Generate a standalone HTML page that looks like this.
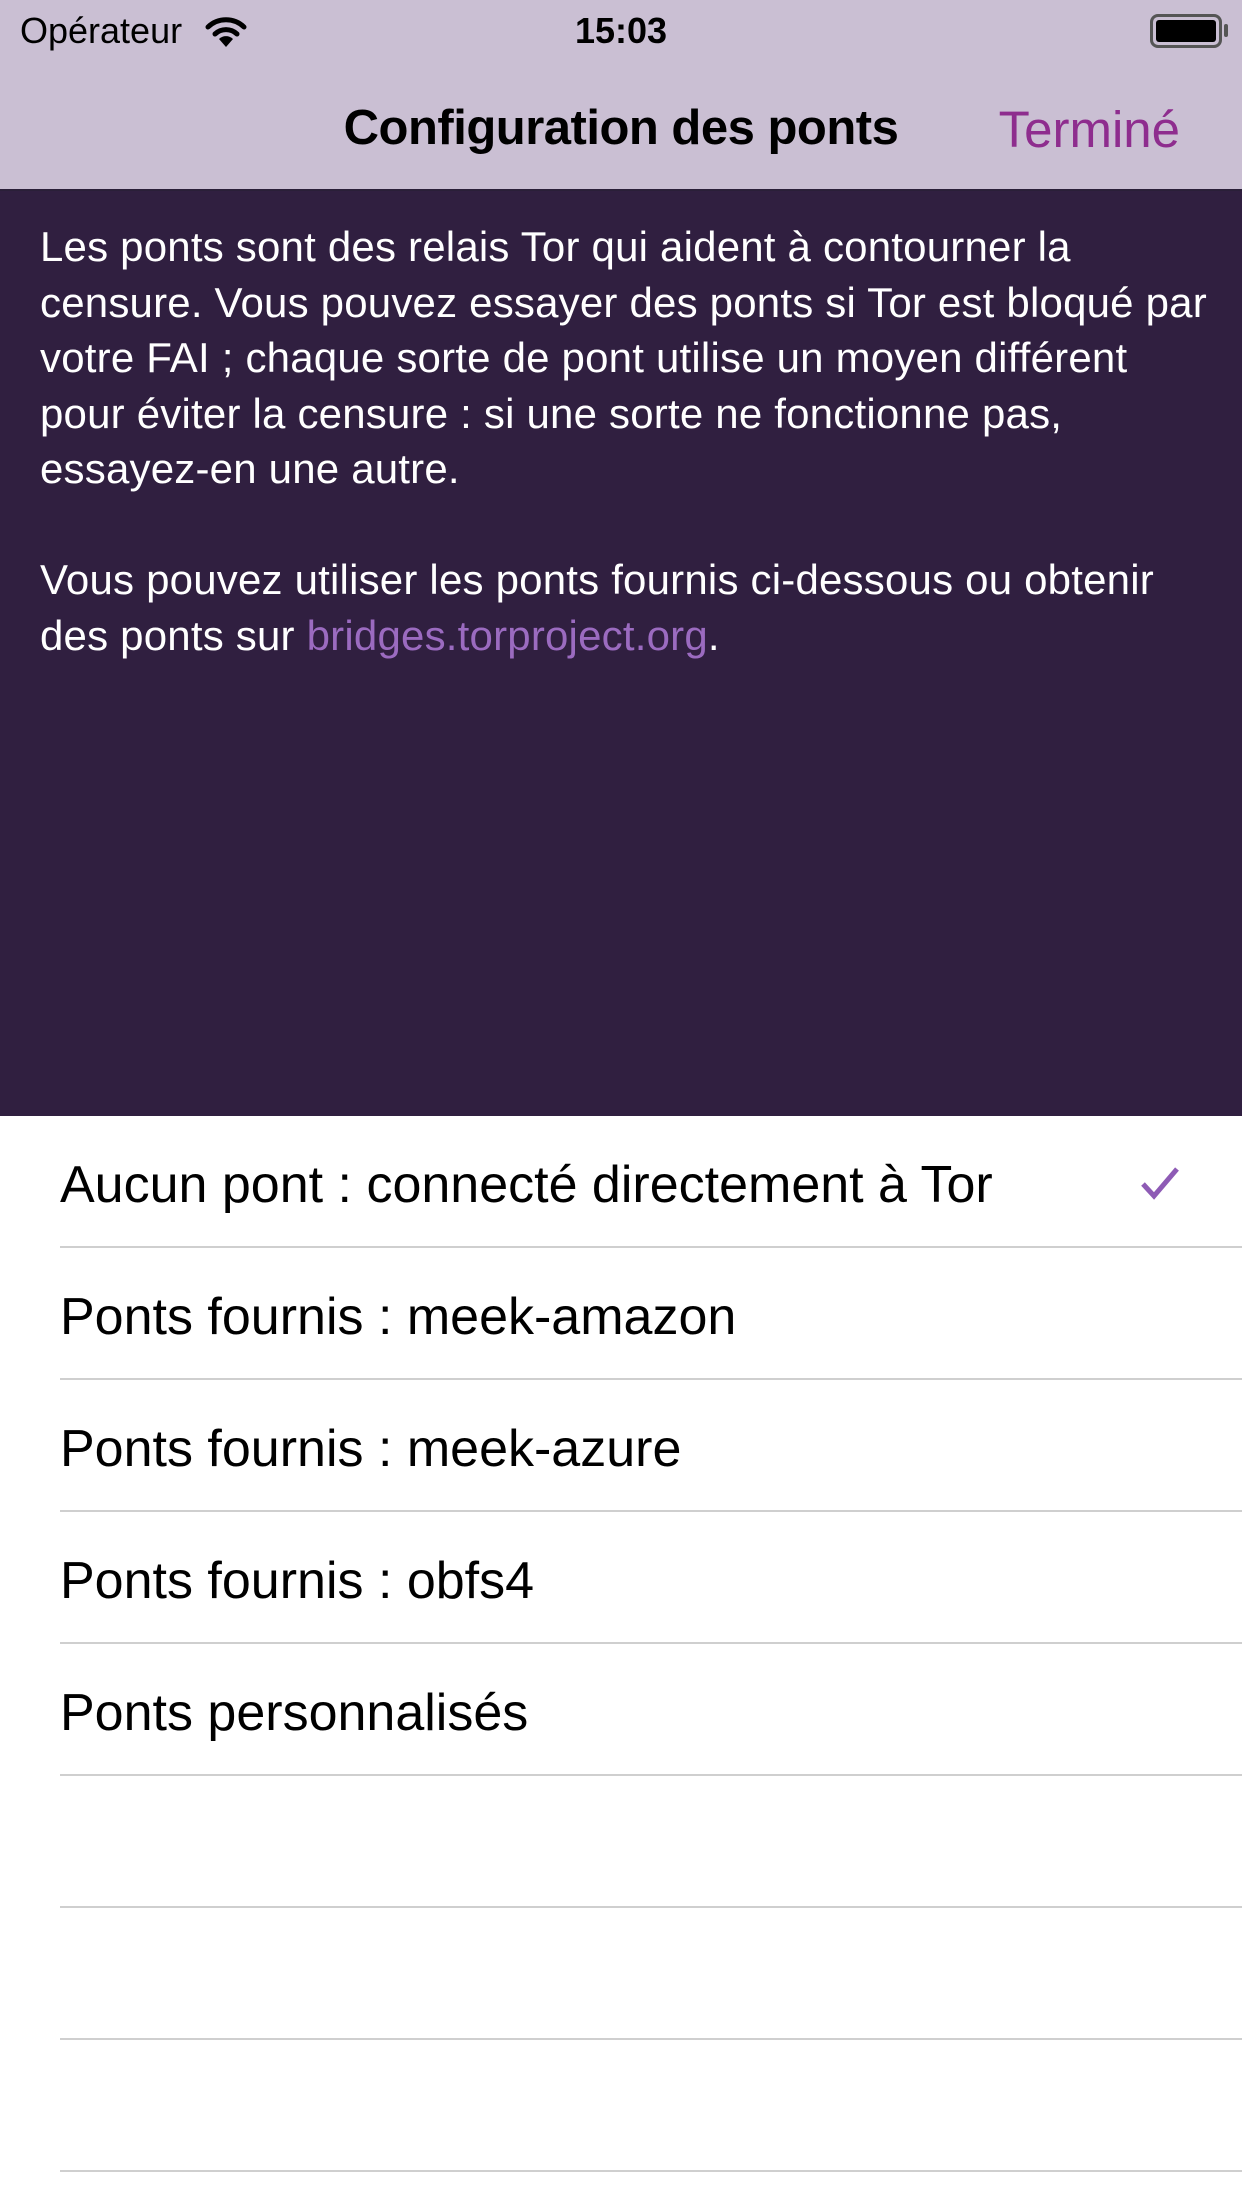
<!DOCTYPE html>
<html><head><meta charset="utf-8"><style>
*{margin:0;padding:0;box-sizing:border-box}
body{width:1242px;height:2208px;background:#fff;font-family:"Liberation Sans",sans-serif;position:relative;overflow:hidden}
.top{position:absolute;left:0;top:0;width:1242px;height:191px;background:#cabfd3;border-bottom:2px solid #2a1f38}
.st{position:absolute;top:10px;font-size:36px;color:#000}
.title{position:absolute;top:100px;left:0;width:1242px;text-align:center;font-weight:bold;font-size:49px;letter-spacing:-0.5px}
.done{position:absolute;top:100px;right:62px;font-size:51px;color:#8e2d8e}
.dark{position:absolute;left:0;top:191px;width:1242px;height:925px;background:#301f40;color:#fff;font-size:42px;line-height:55.5px;padding:28px 0 0 40px;letter-spacing:0.2px;white-space:nowrap}
.dark a{color:#9b6bc0;text-decoration:none}
.row{position:absolute;left:60px;right:0;height:132px;border-bottom:2px solid #cfcfcf;font-size:52px;line-height:138px;color:#000;letter-spacing:0px}
</style></head><body>
<div class="top">
<div class="st" style="left:20px">Opérateur</div>
<svg style="position:absolute;left:204px;top:14px" width="44" height="36" viewBox="0 0 44 36"><g fill="none" stroke="#000" stroke-width="5" stroke-linecap="round"><path d="M4 13 A26 26 0 0 1 40 13"/><path d="M11 20 A16 16 0 0 1 33 20"/></g><path d="M22 33 L15 25 A10 10 0 0 1 29 25 Z" fill="#000"/></svg>
<div class="st" style="left:0;width:1242px;text-align:center;font-weight:bold">15:03</div>
<div style="position:absolute;left:1150px;top:14px;width:72px;height:34px;border:3px solid #555;border-radius:8px;padding:3px"><div style="background:#000;width:100%;height:100%;border-radius:3px"></div></div>
<div style="position:absolute;left:1224px;top:24px;width:4px;height:13px;background:#555;border-radius:2px"></div>
<div class="title">Configuration des ponts</div>
<div class="done">Terminé</div>
</div>
<div class="dark">Les ponts sont des relais Tor qui aident à contourner la<br>censure. Vous pouvez essayer des ponts si Tor est bloqué par<br>votre FAI ; chaque sorte de pont utilise un moyen différent<br>pour éviter la censure : si une sorte ne fonctionne pas,<br>essayez-en une autre.<br><br>Vous pouvez utiliser les ponts fournis ci-dessous ou obtenir<br>des ponts sur <a>bridges.torproject.org</a>.</div>
<div class="row" style="top:1116px">Aucun pont : connecté directement à Tor
<svg style="position:absolute;left:1080px;top:50px" width="40" height="34" viewBox="0 0 40 34"><path d="M3 18 L14 30 L37 3" fill="none" stroke="#8e5bb5" stroke-width="5"/></svg></div>
<div class="row" style="top:1248px">Ponts fournis : meek-amazon</div>
<div class="row" style="top:1380px">Ponts fournis : meek-azure</div>
<div class="row" style="top:1512px">Ponts fournis : obfs4</div>
<div class="row" style="top:1644px">Ponts personnalisés</div>
<div class="row" style="top:1776px"></div>
<div class="row" style="top:1908px"></div>
<div class="row" style="top:2040px"></div>
</body></html>
